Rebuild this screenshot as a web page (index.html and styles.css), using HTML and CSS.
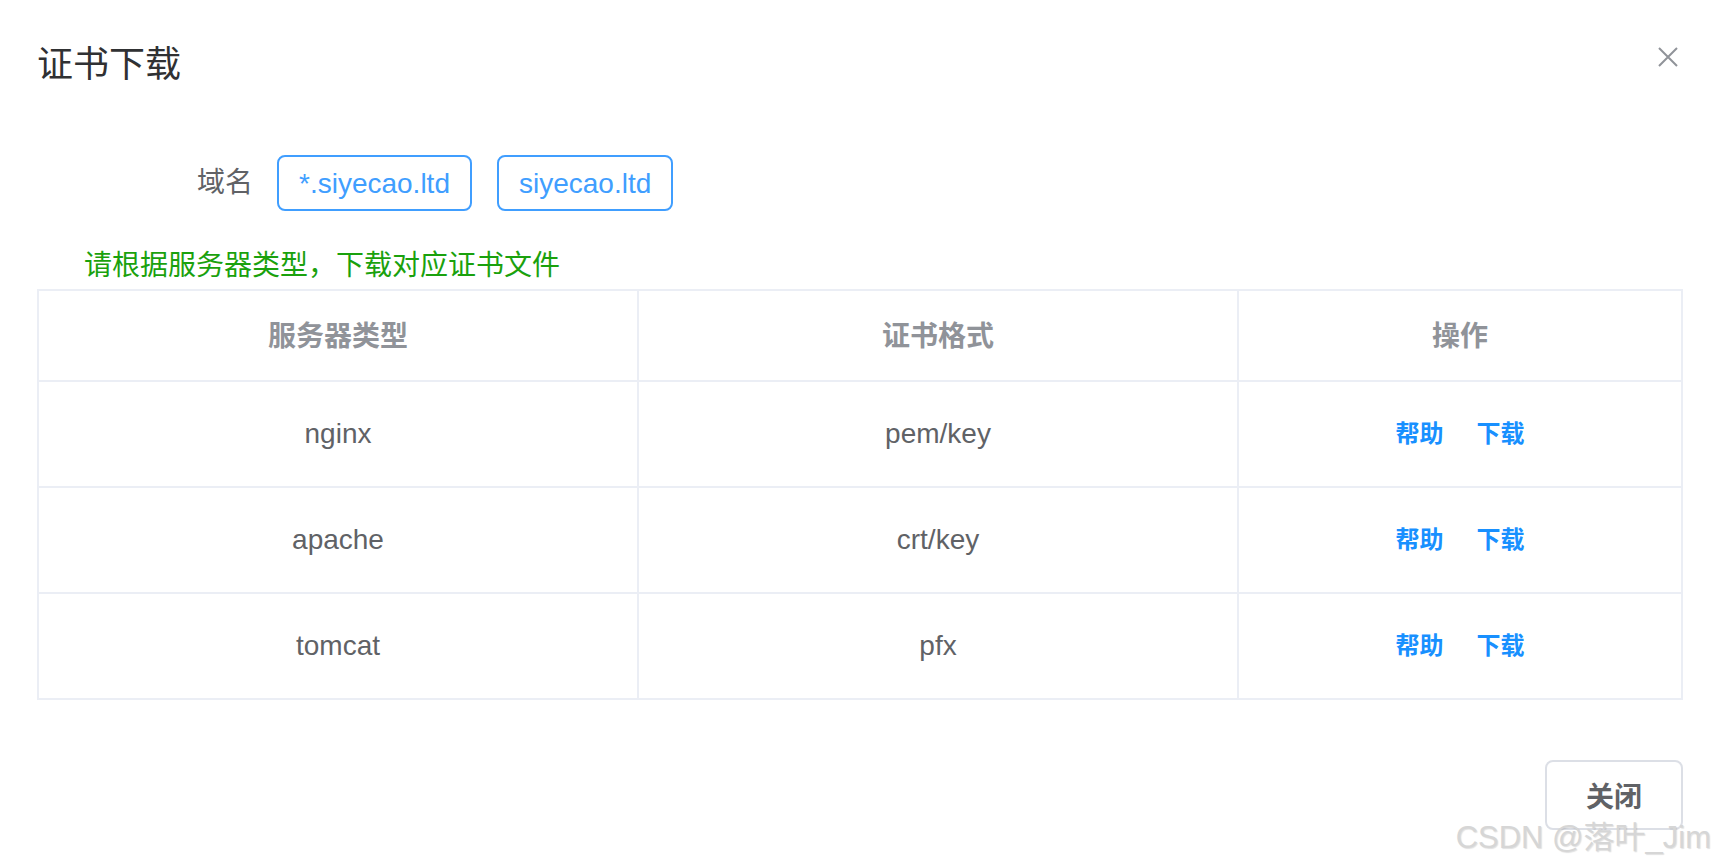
FILE: index.html
```html
<!DOCTYPE html>
<html lang="zh-CN">
<head>
  <meta charset="UTF-8" />
  <meta name="viewport" content="width=device-width, initial-scale=1.0" />
  <title>证书下载</title>
  <link rel="stylesheet" href="styles.css">
</head>
<body>

<div class="dialog">
  <header class="dialog-header">
    <h2 class="dialog-title">证书下载</h2>
    <button class="dialog-close" aria-label="关闭">
      <svg width="20" height="20" viewBox="0 0 20 20">
        <path d="M1 1 L19 19 M19 1 L1 19" stroke="#909399" stroke-width="2" fill="none" />
      </svg>
    </button>
  </header>

  <div class="form-row">
    <label class="form-label">域名</label>
    <div class="tags">
      <span class="tag">*.siyecao.ltd</span>
      <span class="tag">siyecao.ltd</span>
    </div>
  </div>

  <p class="tip">请根据服务器类型，下载对应证书文件</p>

  <table class="cert-table">
    <thead>
      <tr>
        <th class="col-type">服务器类型</th>
        <th class="col-format">证书格式</th>
        <th>操作</th>
      </tr>
    </thead>
    <tbody>
      <tr>
        <td>nginx</td>
        <td>pem/key</td>
        <td><span class="actions"><a>帮助</a><a>下载</a></span></td>
      </tr>
      <tr>
        <td>apache</td>
        <td>crt/key</td>
        <td><span class="actions"><a>帮助</a><a>下载</a></span></td>
      </tr>
      <tr>
        <td>tomcat</td>
        <td>pfx</td>
        <td><span class="actions"><a>帮助</a><a>下载</a></span></td>
      </tr>
    </tbody>
  </table>

  <footer class="dialog-footer">
    <button class="btn">关闭</button>
  </footer>
</div>

<div class="watermark">CSDN @落叶_Jim</div>

</body>
</html>
```

FILE: styles.css
```css
* {
  box-sizing: border-box;
}

html, body {
  margin: 0;
  padding: 0;
  background: #fff;
  font-family: 'Liberation Sans', 'Noto Sans CJK SC', sans-serif;
  color: #606266;
}

.dialog {
  padding: 41px 33px 0 37px;
}

.dialog-header {
  display: flex;
  justify-content: space-between;
  align-items: flex-start;
}

.dialog-title {
  margin: 0;
  font-size: 36px;
  line-height: 48px;
  font-weight: normal;
  color: #303133;
}

.dialog-close {
  margin-top: 6px;
  margin-right: 5px;
  padding: 0;
  border: none;
  background: none;
  width: 20px;
  height: 20px;
  cursor: pointer;
}

.dialog-close svg {
  display: block;
}

.form-row {
  display: flex;
  align-items: center;
  margin-top: 66px;
}

.form-label {
  width: 240px;
  padding-right: 24px;
  text-align: right;
  font-size: 28px;
  line-height: 56px;
  color: #606266;
}

.tags {
  display: flex;
  gap: 25px;
}

.tag {
  display: inline-block;
  height: 56px;
  padding: 0 20px;
  border: 2px solid #409eff;
  border-radius: 8px;
  font-size: 28px;
  line-height: 54px;
  color: #409eff;
}

.tip {
  margin: 35px 0 0 47px;
  font-size: 28px;
  line-height: 40px;
  color: #1aa10d;
}

.cert-table {
  width: 100%;
  margin-top: 3px;
  border-collapse: collapse;
  table-layout: fixed;
}

.cert-table th,
.cert-table td {
  border: 2px solid #ebeef5;
  text-align: center;
  font-size: 28px;
  line-height: 40px;
}

.cert-table th {
  padding: 26px 0 23px;
  font-weight: bold;
  color: #909399;
}

.cert-table td {
  padding: 32px 0;
  color: #606266;
}

.col-type,
.col-format {
  width: 600px;
}

.actions {
  display: inline-flex;
  gap: 33px;
  vertical-align: top;
}

.actions a {
  font-size: 24px;
  color: #1890ff;
  font-weight: 600;
  cursor: pointer;
}

.dialog-footer {
  display: flex;
  justify-content: flex-end;
  margin-top: 60px;
}

.btn {
  width: 138px;
  height: 70px;
  border: 2px solid #dcdfe6;
  border-radius: 8px;
  background: #fff;
  font-family: inherit;
  font-size: 28px;
  font-weight: bold;
  color: #606266;
  cursor: pointer;
}

.watermark {
  position: absolute;
  right: 5px;
  top: 820px;
  font-size: 31px;
  line-height: 36px;
  color: #d6d6d6;
  text-shadow: 1px 1px 1px rgba(0, 0, 0, 0.12);
  white-space: nowrap;
}
```
